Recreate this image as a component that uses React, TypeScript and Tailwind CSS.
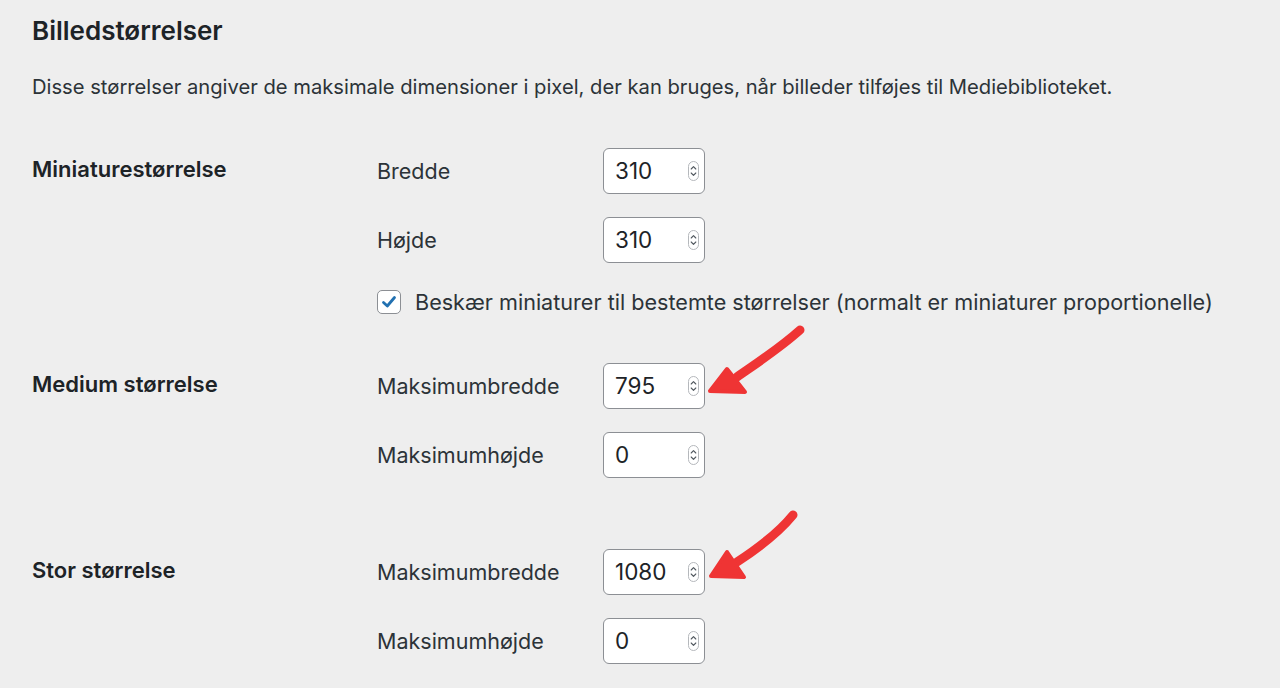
import type { ReactNode } from "react"

const font = { fontFamily: "Inter, 'Noto Sans', sans-serif" }

function Spinner() {
  return (
    <span className="flex h-[20px] w-[11px] flex-col items-center justify-center rounded-full border border-[#b5b8bc] bg-white">
      <svg width="7" height="14" viewBox="0 0 7 14" fill="none" stroke="#50575e" strokeWidth="1.1" strokeLinecap="round" strokeLinejoin="round">
        <path d="M1.2 5 L3.5 2.6 L5.8 5" />
        <path d="M1.2 9 L3.5 11.4 L5.8 9" />
      </svg>
    </span>
  )
}

function NumberBox({ value, arrow }: { value: string; arrow?: ReactNode }) {
  return (
    <div className="relative">
      <div className="flex h-[46px] w-[102px] items-center justify-between rounded-[6px] border border-[#8c8f94] bg-white pl-[11px] pr-[5px]">
        <span className="text-[22.5px] text-[#1d2327]">{value}</span>
        <Spinner />
      </div>
      {arrow}
    </div>
  )
}

function Arrow({ shaft, head }: { shaft: string; head: string }) {
  return (
    <svg
      className="absolute left-full top-[-40px]"
      width="110"
      height="85"
      viewBox="0 0 110 85"
      fill="none"
    >
      <path d={shaft} stroke="#ef3434" strokeWidth="9" strokeLinecap="round" fill="none" />
      <path d={head} fill="#ef3434" stroke="#ef3434" strokeWidth="4" strokeLinejoin="round" />
    </svg>
  )
}

function Field({ label, value, arrow }: { label: string; value: string; arrow?: ReactNode }) {
  return (
    <div className="flex items-center">
      <span className="w-[226px] text-[21.5px] leading-[30px] text-[#2c3338]">{label}</span>
      <NumberBox value={value} arrow={arrow} />
    </div>
  )
}

function Section({ title, children, className }: { title: string; children: ReactNode; className?: string }) {
  return (
    <div className={"flex " + (className ?? "")}>
      <div className="w-[345px] pt-[6px] text-[22px] font-semibold leading-[30px] text-[#1d2327]">{title}</div>
      <div className="flex flex-col">{children}</div>
    </div>
  )
}

export default function App() {
  return (
    <main className="h-[688px] overflow-hidden bg-[#eeeeee] px-[32px] pt-[15px]" style={font}>
      <h2 className="text-[26px] font-semibold leading-[32px] text-[#1d2327]">Billedstørrelser</h2>
      <p className="mt-[24px] text-[20.2px] leading-[32px] text-[#2c3338]">
        Disse størrelser angiver de maksimale dimensioner i pixel, der kan bruges, når billeder tilføjes til Mediebiblioteket.
      </p>

      <Section title="Miniaturestørrelse" className="mt-[45px]">
        <div className="flex flex-col gap-[23px]">
          <Field label="Bredde" value="310" />
          <Field label="Højde" value="310" />
        </div>
        <label className="mt-[27px] flex h-[24px] items-center gap-[14px]">
          <span className="flex h-[24px] w-[24px] items-center justify-center rounded-[5px] border border-[#8c8f94] bg-white">
            <svg width="18" height="18" viewBox="0 0 18 18" fill="none">
              <path d="M3.5 9.5 L7.3 13 L14.5 4.5" stroke="#2271b1" strokeWidth="2.8" strokeLinecap="round" strokeLinejoin="round" />
            </svg>
          </span>
          <span className="text-[21.6px] leading-[24px] text-[#2c3338]">
            Beskær miniaturer til bestemte størrelser (normalt er miniaturer proportionelle)
          </span>
        </label>
      </Section>

      <Section title="Medium størrelse" className="mt-[49px]">
        <div className="flex flex-col gap-[23px]">
          <Field
            label="Maksimumbredde"
            value="795"
            arrow={<Arrow shaft="M95 7 C75 25 52 40 32 54" head="M5 68 L22 46 L40 69 Z" />}
          />
          <Field label="Maksimumhøjde" value="0" />
        </div>
      </Section>

      <Section title="Stor størrelse" className="mt-[71px]">
        <div className="flex flex-col gap-[23px]">
          <Field
            label="Maksimumbredde"
            value="1080"
            arrow={<Arrow shaft="M88 6 C75 22 55 38 32 53" head="M6 67 L22 43 L39 68 Z" />}
          />
          <Field label="Maksimumhøjde" value="0" />
        </div>
      </Section>
    </main>
  )
}
